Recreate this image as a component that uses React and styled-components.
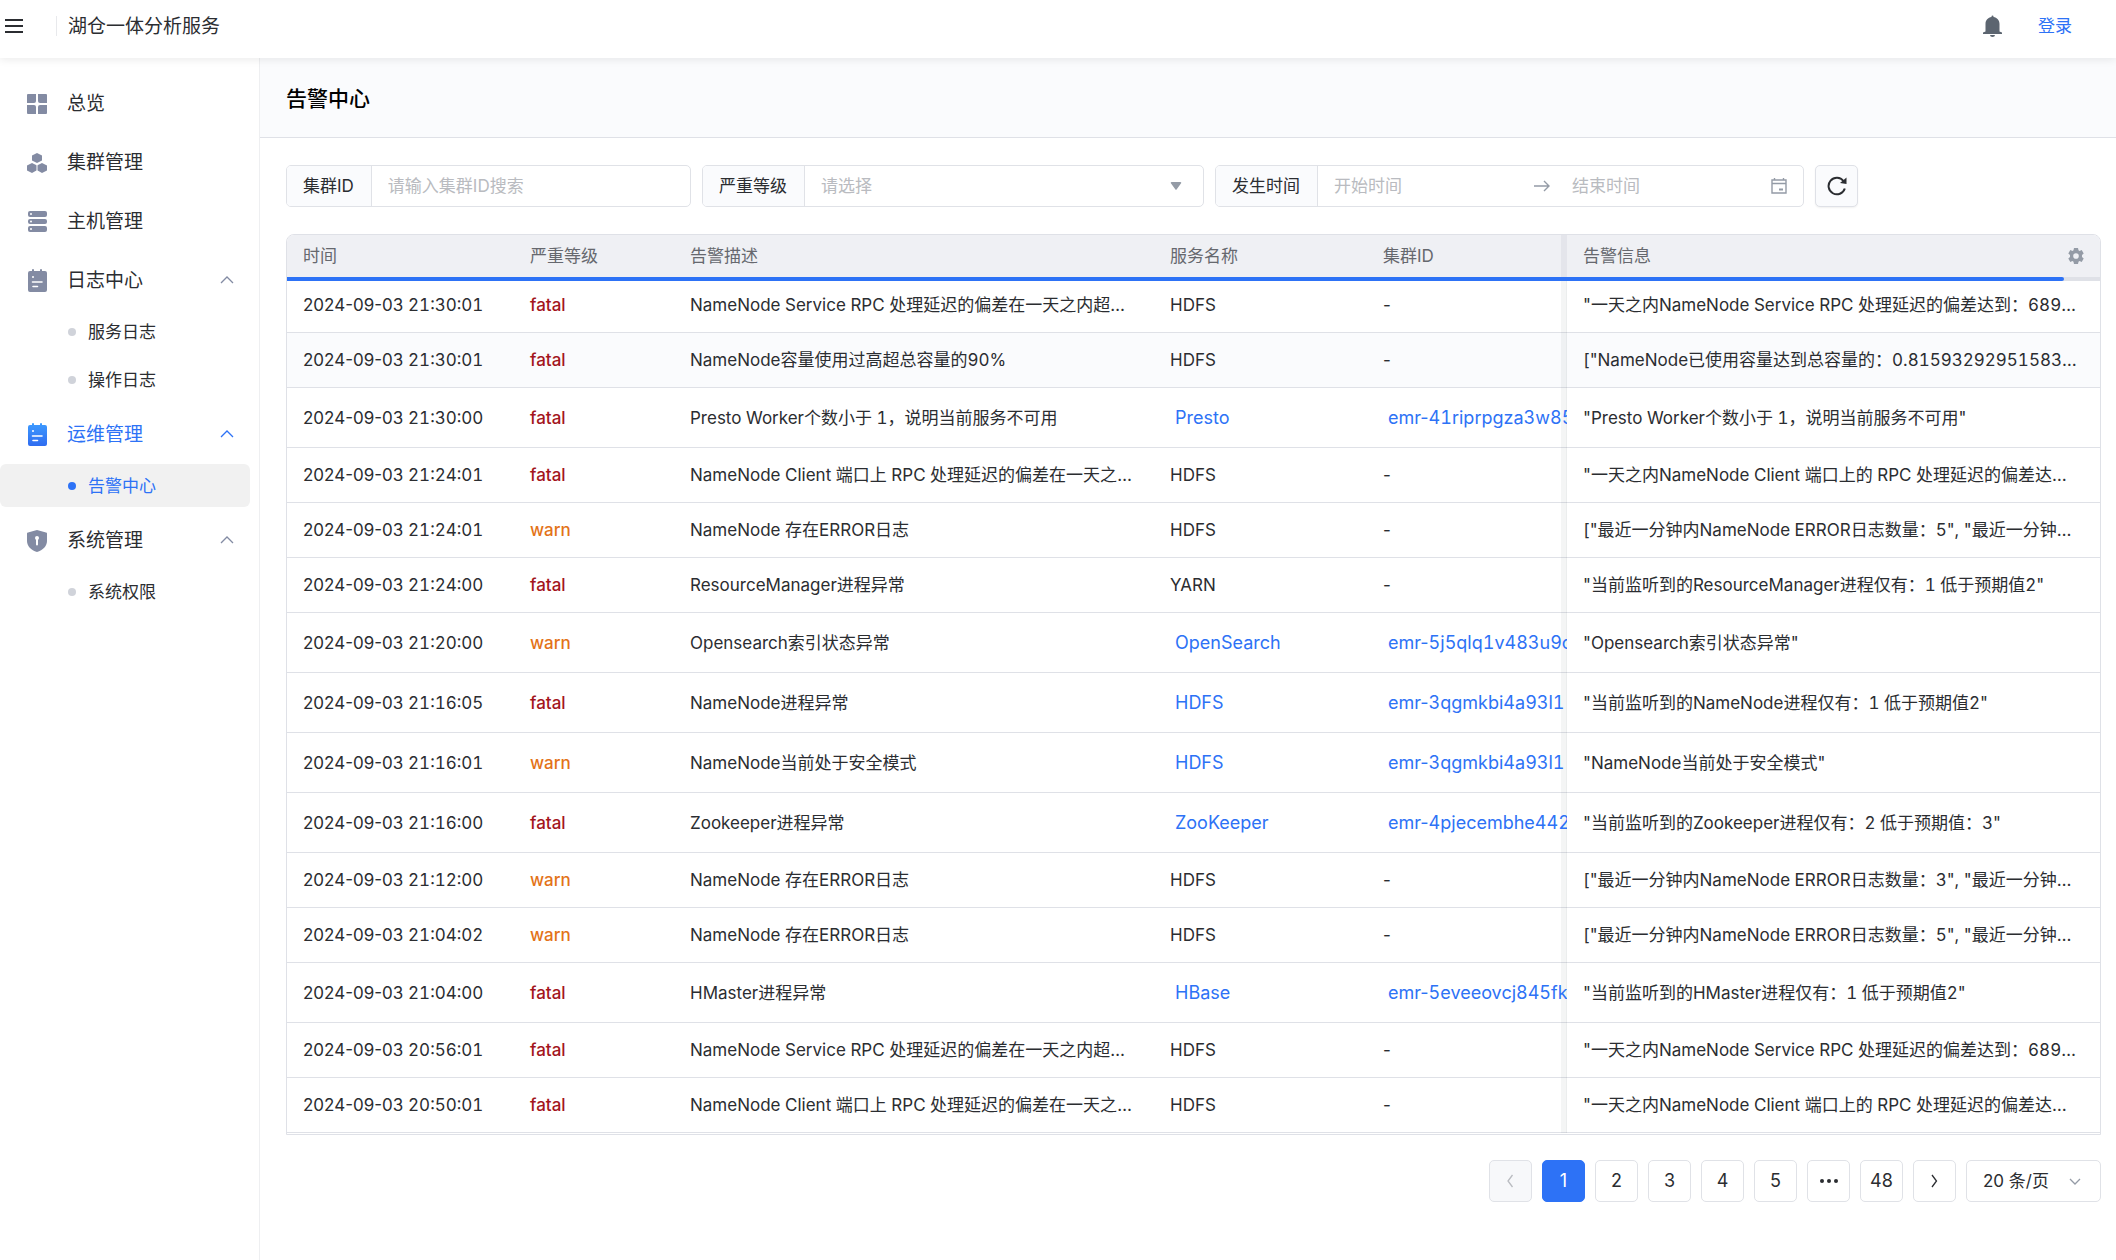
import { useState } from "react";
import styled, { createGlobalStyle } from "styled-components";

const GlobalStyle = createGlobalStyle`
  * {
    box-sizing: border-box;
  }
  body {
    margin: 0;
    background: #fff;
    color: #2b2d31;
    font-family: Inter, "Noto Sans CJK SC", sans-serif;
    font-size: 17px;
    line-height: 24px;
  }
  button, input, select {
    font: inherit;
    color: inherit;
  }
  button {
    cursor: pointer;
  }
  a {
    color: inherit;
    text-decoration: none;
  }
`;

const ALARMS = [
  { date: "2024-09-03", time: "21:30:01", level: "fatal", desc: "NameNode Service RPC 处理延迟的偏差在一天之内超过阈值", service: "HDFS", info: "\"一天之内NameNode Service RPC 处理延迟的偏差达到：68925\"" },
  { date: "2024-09-03", time: "21:30:01", level: "fatal", desc: "NameNode容量使用过高超总容量的90%", service: "HDFS", info: "[\"NameNode已使用容量达到总容量的：0.81593292951583862\"]", active: true },
  { date: "2024-09-03", time: "21:30:00", level: "fatal", desc: "Presto Worker个数小于 1，说明当前服务不可用", service: "Presto", cluster: "41riprpgza3w85k2", info: "\"Presto Worker个数小于 1，说明当前服务不可用\"" },
  { date: "2024-09-03", time: "21:24:01", level: "fatal", desc: "NameNode Client 端口上 RPC 处理延迟的偏差在一天之内超过阈值", service: "HDFS", info: "\"一天之内NameNode Client 端口上的 RPC 处理延迟的偏差达到：68925\"" },
  { date: "2024-09-03", time: "21:24:01", level: "warn", desc: "NameNode 存在ERROR日志", service: "HDFS", info: "[\"最近一分钟内NameNode ERROR日志数量：5\", \"最近一分钟内日志\"]" },
  { date: "2024-09-03", time: "21:24:00", level: "fatal", desc: "ResourceManager进程异常", service: "YARN", info: "\"当前监听到的ResourceManager进程仅有：1 低于预期值2\"" },
  { date: "2024-09-03", time: "21:20:00", level: "warn", desc: "Opensearch索引状态异常", service: "OpenSearch", cluster: "5j5qlq1v483u9o3d", info: "\"Opensearch索引状态异常\"" },
  { date: "2024-09-03", time: "21:16:05", level: "fatal", desc: "NameNode进程异常", service: "HDFS", cluster: "3qgmkbi4a93l1", info: "\"当前监听到的NameNode进程仅有：1 低于预期值2\"" },
  { date: "2024-09-03", time: "21:16:01", level: "warn", desc: "NameNode当前处于安全模式", service: "HDFS", cluster: "3qgmkbi4a93l1", info: "\"NameNode当前处于安全模式\"" },
  { date: "2024-09-03", time: "21:16:00", level: "fatal", desc: "Zookeeper进程异常", service: "ZooKeeper", cluster: "4pjecembhe442s", info: "\"当前监听到的Zookeeper进程仅有：2 低于预期值：3\"" },
  { date: "2024-09-03", time: "21:12:00", level: "warn", desc: "NameNode 存在ERROR日志", service: "HDFS", info: "[\"最近一分钟内NameNode ERROR日志数量：3\", \"最近一分钟内日志\"]" },
  { date: "2024-09-03", time: "21:04:02", level: "warn", desc: "NameNode 存在ERROR日志", service: "HDFS", info: "[\"最近一分钟内NameNode ERROR日志数量：5\", \"最近一分钟内日志\"]" },
  { date: "2024-09-03", time: "21:04:00", level: "fatal", desc: "HMaster进程异常", service: "HBase", cluster: "5eveeovcj845fk", info: "\"当前监听到的HMaster进程仅有：1 低于预期值2\"" },
  { date: "2024-09-03", time: "20:56:01", level: "fatal", desc: "NameNode Service RPC 处理延迟的偏差在一天之内超过阈值", service: "HDFS", info: "\"一天之内NameNode Service RPC 处理延迟的偏差达到：68925\"" },
  { date: "2024-09-03", time: "20:50:01", level: "fatal", desc: "NameNode Client 端口上 RPC 处理延迟的偏差在一天之内超过阈值", service: "HDFS", info: "\"一天之内NameNode Client 端口上的 RPC 处理延迟的偏差达到：68925\"" },
];

const MENU = [
  { label: "总览", icon: OverviewIcon },
  { label: "集群管理", icon: ClusterIcon },
  { label: "主机管理", icon: HostIcon },
  { label: "日志中心", icon: LogIcon, children: ["服务日志", "操作日志"] },
  { label: "运维管理", icon: LogIcon, active: true, children: ["告警中心"] },
  { label: "系统管理", icon: ShieldIcon, children: ["系统权限"] },
];

const PAGES = ["1", "2", "3", "4", "5", "…", "48"];

function OverviewIcon() {
  return (
    <svg width="20" height="20" viewBox="0 0 20 20" fill="currentColor">
      <path d="M1 0h8v7a2 2 0 0 1-2 2H0V1a1 1 0 0 1 1-1z" />
      <path d="M11 0h8a1 1 0 0 1 1 1v8h-7a2 2 0 0 1-2-2z" />
      <path d="M0 11h7a2 2 0 0 1 2 2v7H1a1 1 0 0 1-1-1z" />
      <path d="M13 11h7v8a1 1 0 0 1-1 1h-8v-7a2 2 0 0 1 2-2z" />
    </svg>
  );
}

function ClusterIcon() {
  return (
    <svg width="20" height="20" viewBox="0 0 20 20" fill="currentColor">
      <path d="M10 0l4 2a1 1 0 0 1 1 1v4a1 1 0 0 1-1 1l-4 2-4-2a1 1 0 0 1-1-1V3a1 1 0 0 1 1-1z" />
      <path d="M5 10l3.500 1.800a1 1 0 0 1 1 1v4.200a1 1 0 0 1-1 1L5 20l-4-2a1 1 0 0 1-1-1v-4a1 1 0 0 1 1-1z" />
      <path d="M15 10l4 2a1 1 0 0 1 1 1v4a1 1 0 0 1-1 1l-4 2-3.500-2a1 1 0 0 1-1-1v-4.200a1 1 0 0 1 1-1z" />
    </svg>
  );
}

function HostIcon() {
  return (
    <svg width="20" height="22" viewBox="0 0 20 22" fill="currentColor">
      <rect x="1" y="0" width="19" height="6" rx="2" />
      <rect x="1" y="8" width="19" height="5" rx="2" />
      <rect x="1" y="15" width="19" height="6" rx="2" />
      <circle cx="4" cy="3" r="1" fill="#fff" />
      <circle cx="4" cy="10.500" r="1" fill="#fff" />
      <circle cx="4" cy="18" r="1" fill="#fff" />
    </svg>
  );
}

function LogIcon({ active }) {
  return (
    <svg width="20" height="24" viewBox="0 0 20 24" fill={active ? "url(#log-active)" : "currentColor"}>
      <defs>
        <linearGradient id="log-active" x1="0" y1="0" x2="0" y2="1">
          <stop offset="0" stopColor="#3d9bff" />
          <stop offset="1" stopColor="#2f6cf0" />
        </linearGradient>
      </defs>
      <path d="M3 2h2V1a1 1 0 0 1 2 0v1h6V1a1 1 0 0 1 2 0v1h3a2 2 0 0 1 2 2v17a2 2 0 0 1-2 2H3a2 2 0 0 1-2-2V4a2 2 0 0 1 2-2z" />
      <circle cx="6" cy="8" r="1" fill="#fff" />
      <path d="M5.500 13h9.500M6 17.500h4.500" stroke="#fff" strokeWidth="1.600" strokeLinecap="round" />
    </svg>
  );
}

function ShieldIcon() {
  return (
    <svg width="20" height="22" viewBox="0 0 20 22" fill="currentColor">
      <path d="M10 0l9 2.500a1 1 0 0 1 1 1V11c0 5-4 9-10 11C4 20 0 16 0 11V3.500a1 1 0 0 1 1-1z" />
      <circle cx="10" cy="8" r="2" fill="#fff" />
      <path d="M10 8v6.500" stroke="#fff" strokeWidth="2" strokeLinecap="round" />
    </svg>
  );
}

function Chevron({ d }) {
  return (
    <svg width="14" height="14" viewBox="0 0 14 14" fill="none" stroke="currentColor" strokeWidth="1.300">
      <path d={d} />
    </svg>
  );
}

const UP = "M1 9l6-6 6 6";
const DOWN = "M2 5l5 5 5-5";
const LEFT = "M8.500 1L4 7l4.500 6";
const RIGHT = "M4 1l4.500 6L4 13";

const Page = styled.div`
  min-height: 100vh;
  display: flex;
  flex-direction: column;
`;

const TopBar = styled.header`
  height: 58px;
  padding: 0 44px 6px 5px;
  display: flex;
  align-items: center;
  background: #fff;
  box-shadow: 0 2px 8px rgba(0, 0, 0, 0.08);
  z-index: 2;
`;

const IconButton = styled.button`
  display: flex;
  padding: 0;
  border: 0;
  background: none;
  color: ${(props) => props.$color || "#2b2d31"};
`;

const ProductName = styled.div`
  margin-left: 33px;
  padding: 2px 0 0 11px;
  border-left: 1px solid #e8e9ec;
  line-height: 18px;
  font-size: 19px;
`;

const TopActions = styled.div`
  margin-left: auto;
  display: flex;
  align-items: center;
  gap: 36px;
`;

const LoginLink = styled.a`
  color: #2d72f6;
`;

const Body = styled.div`
  flex: 1;
  display: flex;
`;

const Sidebar = styled.nav`
  width: 260px;
  flex: none;
  padding-top: 16px;
  border-right: 1px solid #eeeff1;
`;

const MenuItem = styled.a`
  height: 59px;
  padding: 0 25px 0 27px;
  display: flex;
  align-items: center;
  gap: 20px;
  font-size: 19px;
  color: ${(props) => (props.$active ? "#2d72f6" : "#2b2d31")};
`;

const MenuIcon = styled.span`
  width: 20px;
  display: flex;
  color: #838ba3;
`;

const MenuArrow = styled.span`
  margin-left: auto;
  display: flex;
  color: ${(props) => (props.$active ? "#2d72f6" : "#838ba3")};
`;

const SubMenu = styled.div`
  margin-bottom: -1px;
`;

const SubItem = styled.a`
  height: 43px;
  margin: 0 9px 5px 0;
  padding-left: 68px;
  display: flex;
  align-items: center;
  gap: 12px;
  border-radius: 6px;
  background: ${(props) => (props.$active ? "#f1f1f1" : "transparent")};
  color: ${(props) => (props.$active ? "#2d72f6" : "#2b2d31")};

  &::before {
    content: "";
    width: 8px;
    height: 8px;
    border-radius: 50%;
    background: ${(props) => (props.$active ? "#2d72f6" : "#d0d3da")};
  }
`;

const Main = styled.main`
  flex: 1;
  min-width: 0;
`;

const PageHeader = styled.div`
  height: 80px;
  padding: 2px 26px 0;
  display: flex;
  align-items: center;
  background: #fafbfd;
  border-bottom: 1px solid #dfe1e7;
`;

const PageTitle = styled.h1`
  margin: 0;
  font-size: 21px;
  font-weight: 500;
  color: #000;
`;

const Content = styled.div`
  padding: 27px 15px 58px 26px;
`;

const Filters = styled.form`
  display: flex;
  gap: 11px;
  margin-bottom: 27px;
`;

const Field = styled.div`
  width: ${(props) => props.$width}px;
  height: 42px;
  display: flex;
  align-items: stretch;
  border: 1px solid #e0e2e7;
  border-radius: 5px;
  overflow: hidden;
`;

const FieldLabel = styled.label`
  flex: none;
  padding: 0 17px 0 16px;
  display: flex;
  align-items: center;
  background: #fafbfd;
  border-right: 1px solid #e0e2e7;
`;

const TextInput = styled.input`
  flex: 1;
  min-width: 0;
  padding: 0 16px;
  border: 0;
  outline: 0;
  background: transparent;

  &::placeholder {
    color: #b9bbc0;
    opacity: 1;
  }
`;

const SelectBox = styled.div`
  position: relative;
  flex: 1;
  display: flex;
  align-items: center;

  svg {
    position: absolute;
    right: ${(props) => props.$arrowRight || 18}px;
    color: #949ba6;
    pointer-events: none;
  }
`;

const Select = styled.select`
  width: 100%;
  height: 100%;
  padding: 0 16px;
  border: 0;
  outline: 0;
  appearance: none;
  background: transparent;
  color: ${(props) => (props.$empty ? "#b9bbc0" : "#2b2d31")};
`;

const RangeIcon = styled.span`
  display: flex;
  align-items: center;
  padding-right: ${(props) => props.$right}px;
  color: #949ba6;
`;

const RefreshButton = styled.button`
  width: 43px;
  height: 42px;
  padding: 0;
  display: flex;
  align-items: center;
  justify-content: center;
  border: 1px solid #dfe1e7;
  border-radius: 5px;
  background: #fafbfd;
  box-shadow: 0 1px 2px rgba(0, 0, 0, 0.06);
`;

const TableBox = styled.div`
  position: relative;
  border: 1px solid #dfe1e7;
  border-radius: 8px 8px 0 0;
  padding-bottom: 1px;
  overflow: hidden;
`;

const Progress = styled.div`
  position: absolute;
  top: 42px;
  left: 0;
  right: 0;
  height: 4px;
  background: #dfe1e7;

  div {
    height: 4px;
    border-radius: 0 2px 2px 0;
    background: #2d72f6;
  }
`;

const Table = styled.table`
  width: 100%;
  table-layout: fixed;
  border-collapse: separate;
  border-spacing: 0;
`;

const Col = styled.col`
  width: ${(props) => props.$width}px;
`;

const HeadCell = styled.th`
  height: 43px;
  padding: 0 16px 1px;
  text-align: left;
  font-weight: 400;
  color: #66686e;
  background: #eff0f4;
  box-shadow: ${(props) => (props.$fixed ? "-6px 0 0 rgba(30, 40, 80, 0.05)" : "none")};
`;

const HeadContent = styled.div`
  display: flex;
  align-items: center;
  justify-content: space-between;
`;

const Row = styled.tr`
  background: ${(props) => (props.$active ? "#fafbfd" : "#fff")};
`;

const Cell = styled.td`
  padding: 15px 16px;
  border-bottom: 1px solid #dfe1e7;
  white-space: nowrap;
  overflow: hidden;
  text-overflow: ellipsis;
`;

const LevelCell = styled(Cell)`
  font-weight: 500;
  color: ${(props) => (props.$level === "fatal" ? "#a3151c" : "#e37318")};
`;

const DescCell = styled(Cell)`
  font-variant-numeric: tabular-nums;
`;

const ClusterCell = styled(Cell)`
  padding-right: 0;
  text-overflow: clip;
`;

const FixedCell = styled(Cell)`
  padding-right: 20px;
  font-variant-numeric: tabular-nums;
  box-shadow: -6px 0 0 rgba(30, 50, 50, 0.05), -1px 0 0 rgba(30, 50, 50, 0.04);
`;

const Digits = styled.span`
  font-variant-numeric: tabular-nums;
`;

const CellLink = styled.a`
  display: inline-block;
  padding: 0 5px;
  vertical-align: top;
  font-size: 18px;
  line-height: 29px;
  color: #2d72f6;
`;

const Pagination = styled.div`
  margin-top: 25px;
  display: flex;
  justify-content: flex-end;
  gap: 10px;
  font-size: 18px;
`;

const PageButton = styled.button`
  width: 43px;
  height: 42px;
  padding: 0;
  display: flex;
  align-items: center;
  justify-content: center;
  border: 1px solid ${(props) => (props.$current ? "#2d72f6" : "#e0e2e7")};
  border-radius: 5px;
  background: ${(props) => (props.$current ? "#2d72f6" : "#fff")};
  color: ${(props) => (props.$current ? "#fff" : "#2b2d31")};

  &:disabled {
    background: #f7f8fa;
    color: #b9bbc0;
  }
`;

const PageSize = styled.div`
  width: 135px;
  height: 42px;
  display: flex;
  border: 1px solid #e0e2e7;
  border-radius: 5px;
  font-size: 17px;
`;

function Sider() {
  return (
    <Sidebar>
      {MENU.map(({ label, icon: Icon, active, children }) => (
        <div key={label}>
          <MenuItem href="#" $active={active}>
            <MenuIcon>
              <Icon active={active} />
            </MenuIcon>
            {label}
            {children && (
              <MenuArrow $active={active}>
                <Chevron d={UP} />
              </MenuArrow>
            )}
          </MenuItem>
          {children && (
            <SubMenu>
              {children.map((name) => (
                <SubItem key={name} href="#" $active={name === "告警中心"}>
                  {name}
                </SubItem>
              ))}
            </SubMenu>
          )}
        </div>
      ))}
    </Sidebar>
  );
}

function FilterBar() {
  const [level, setLevel] = useState("");
  return (
    <Filters onSubmit={(e) => e.preventDefault()}>
      <Field $width={405}>
        <FieldLabel htmlFor="cluster">集群ID</FieldLabel>
        <TextInput id="cluster" placeholder="请输入集群ID搜索" />
      </Field>
      <Field $width={502}>
        <FieldLabel htmlFor="level">严重等级</FieldLabel>
        <SelectBox $arrowRight={21}>
          <Select id="level" $empty={!level} value={level} onChange={(e) => setLevel(e.target.value)}>
            <option value="">请选择</option>
            <option value="fatal">fatal</option>
            <option value="warn">warn</option>
          </Select>
          <svg width="12" height="8" viewBox="0 0 12 8" fill="currentColor">
            <path d="M1.500 0h9a.8.8 0 0 1 .6 1.300L6.600 7.500a.8.8 0 0 1-1.200 0L.9 1.300A.8.8 0 0 1 1.500 0z" />
          </svg>
        </SelectBox>
      </Field>
      <Field $width={589}>
        <FieldLabel htmlFor="start">发生时间</FieldLabel>
        <TextInput id="start" placeholder="开始时间" />
        <RangeIcon $right={5}>
          <svg width="18" height="14" viewBox="0 0 18 14" fill="none" stroke="currentColor" strokeWidth="1.400">
            <path d="M1 7h15M11 2l5 5-5 5" />
          </svg>
        </RangeIcon>
        <TextInput aria-label="结束时间" placeholder="结束时间" />
        <RangeIcon $right={16}>
          <svg width="16" height="16" viewBox="0 0 16 16" fill="none" stroke="currentColor" strokeWidth="1.400">
            <path d="M1 2h14v13H1zM1 5.500h14M3.500 0v2M12.500 0v2" />
            <path d="M8 10.500h4v2H8z" fill="currentColor" stroke="none" />
          </svg>
        </RangeIcon>
      </Field>
      <RefreshButton type="button" aria-label="刷新">
        <svg width="20" height="20" viewBox="0 0 20 20" fill="none" stroke="currentColor" strokeWidth="2">
          <path d="M16.500 5A8.300 8.300 0 1 0 17.800 12.500" />
          <path d="M19.500 1.500v6.500L13 7z" fill="currentColor" stroke="none" />
        </svg>
      </RefreshButton>
    </Filters>
  );
}

function AlarmRow({ alarm }) {
  return (
    <Row $active={alarm.active}>
      <Cell>
        {alarm.date} <Digits>{alarm.time}</Digits>
      </Cell>
      <LevelCell $level={alarm.level}>{alarm.level}</LevelCell>
      <DescCell>{alarm.desc}</DescCell>
      <Cell>{alarm.cluster ? <CellLink href="#">{alarm.service}</CellLink> : alarm.service}</Cell>
      <ClusterCell>
        {alarm.cluster ? (
          <CellLink href="#">
            emr-<Digits>{alarm.cluster}</Digits>
          </CellLink>
        ) : (
          "-"
        )}
      </ClusterCell>
      <FixedCell>{alarm.info}</FixedCell>
    </Row>
  );
}

function AlarmTable() {
  return (
    <TableBox>
      <Table>
        <colgroup>
          <Col $width={227} />
          <Col $width={160} />
          <Col $width={480} />
          <Col $width={213} />
          <Col $width={200} />
          <col />
        </colgroup>
        <thead>
          <tr>
            <HeadCell>时间</HeadCell>
            <HeadCell>严重等级</HeadCell>
            <HeadCell>告警描述</HeadCell>
            <HeadCell>服务名称</HeadCell>
            <HeadCell>集群ID</HeadCell>
            <HeadCell $fixed>
              <HeadContent>
                告警信息
                <IconButton $color="#949ba6" aria-label="设置">
                  <svg width="16" height="16" viewBox="0 0 16 16" fill="currentColor" fillRule="evenodd">
                    <path d="M6 0h4l.5 2.300 1 .6L13.700 2l2 3.500L14 7v2l1.700 1.500-2 3.500-2.200-.9-1 .6L10 16H6l-.5-2.300-1-.6-2.200.9-2-3.500L2 9V7L.3 5.500l2-3.500 2.200.9 1-.6zM8 5.200a2.800 2.800 0 1 0 0 5.600 2.800 2.800 0 0 0 0-5.600z" />
                  </svg>
                </IconButton>
              </HeadContent>
            </HeadCell>
          </tr>
        </thead>
        <tbody>
          {ALARMS.map((alarm, i) => (
            <AlarmRow key={i} alarm={alarm} />
          ))}
        </tbody>
      </Table>
      <Progress>
        <div style={{ width: "98%" }} />
      </Progress>
    </TableBox>
  );
}

function Pager() {
  return (
    <Pagination>
      <PageButton disabled aria-label="上一页">
        <Chevron d={LEFT} />
      </PageButton>
      {PAGES.map((page) => (
        <PageButton key={page} $current={page === "1"} aria-label={page === "…" ? "更多" : undefined}>
          {page === "…" ? (
            <svg width="18" height="4" viewBox="0 0 18 4" fill="currentColor">
              <circle cx="2" cy="2" r="2" />
              <circle cx="9" cy="2" r="2" />
              <circle cx="16" cy="2" r="2" />
            </svg>
          ) : (
            page
          )}
        </PageButton>
      ))}
      <PageButton aria-label="下一页">
        <Chevron d={RIGHT} />
      </PageButton>
      <PageSize>
        <SelectBox>
          <Select aria-label="每页条数" defaultValue="20">
            <option value="20">20 条/页</option>
            <option value="50">50 条/页</option>
          </Select>
          <Chevron d={DOWN} />
        </SelectBox>
      </PageSize>
    </Pagination>
  );
}

export default function App() {
  return (
    <Page>
      <GlobalStyle />
      <TopBar>
        <IconButton aria-label="菜单">
          <svg width="18" height="14" viewBox="0 0 18 14" stroke="currentColor" strokeWidth="2">
            <path d="M0 1h18M0 7h18M0 13h18" />
          </svg>
        </IconButton>
        <ProductName>湖仓一体分析服务</ProductName>
        <TopActions>
          <IconButton $color="#5c6570" aria-label="通知">
            <svg width="19" height="22" viewBox="0 0 19 22" fill="currentColor">
              <path d="M8.500 1.500a1 1 0 0 1 2 0v.6c3.500.5 6 3.200 6 6.900v7.500l2.500 1V19H0v-1.500l2.500-1V9c0-3.700 2.500-6.400 6-6.900z" />
              <path d="M7 20h5a2.500 2 0 0 1-5 0z" />
            </svg>
          </IconButton>
          <LoginLink href="#">登录</LoginLink>
        </TopActions>
      </TopBar>
      <Body>
        <Sider />
        <Main>
          <PageHeader>
            <PageTitle>告警中心</PageTitle>
          </PageHeader>
          <Content>
            <FilterBar />
            <AlarmTable />
            <Pager />
          </Content>
        </Main>
      </Body>
    </Page>
  );
}
